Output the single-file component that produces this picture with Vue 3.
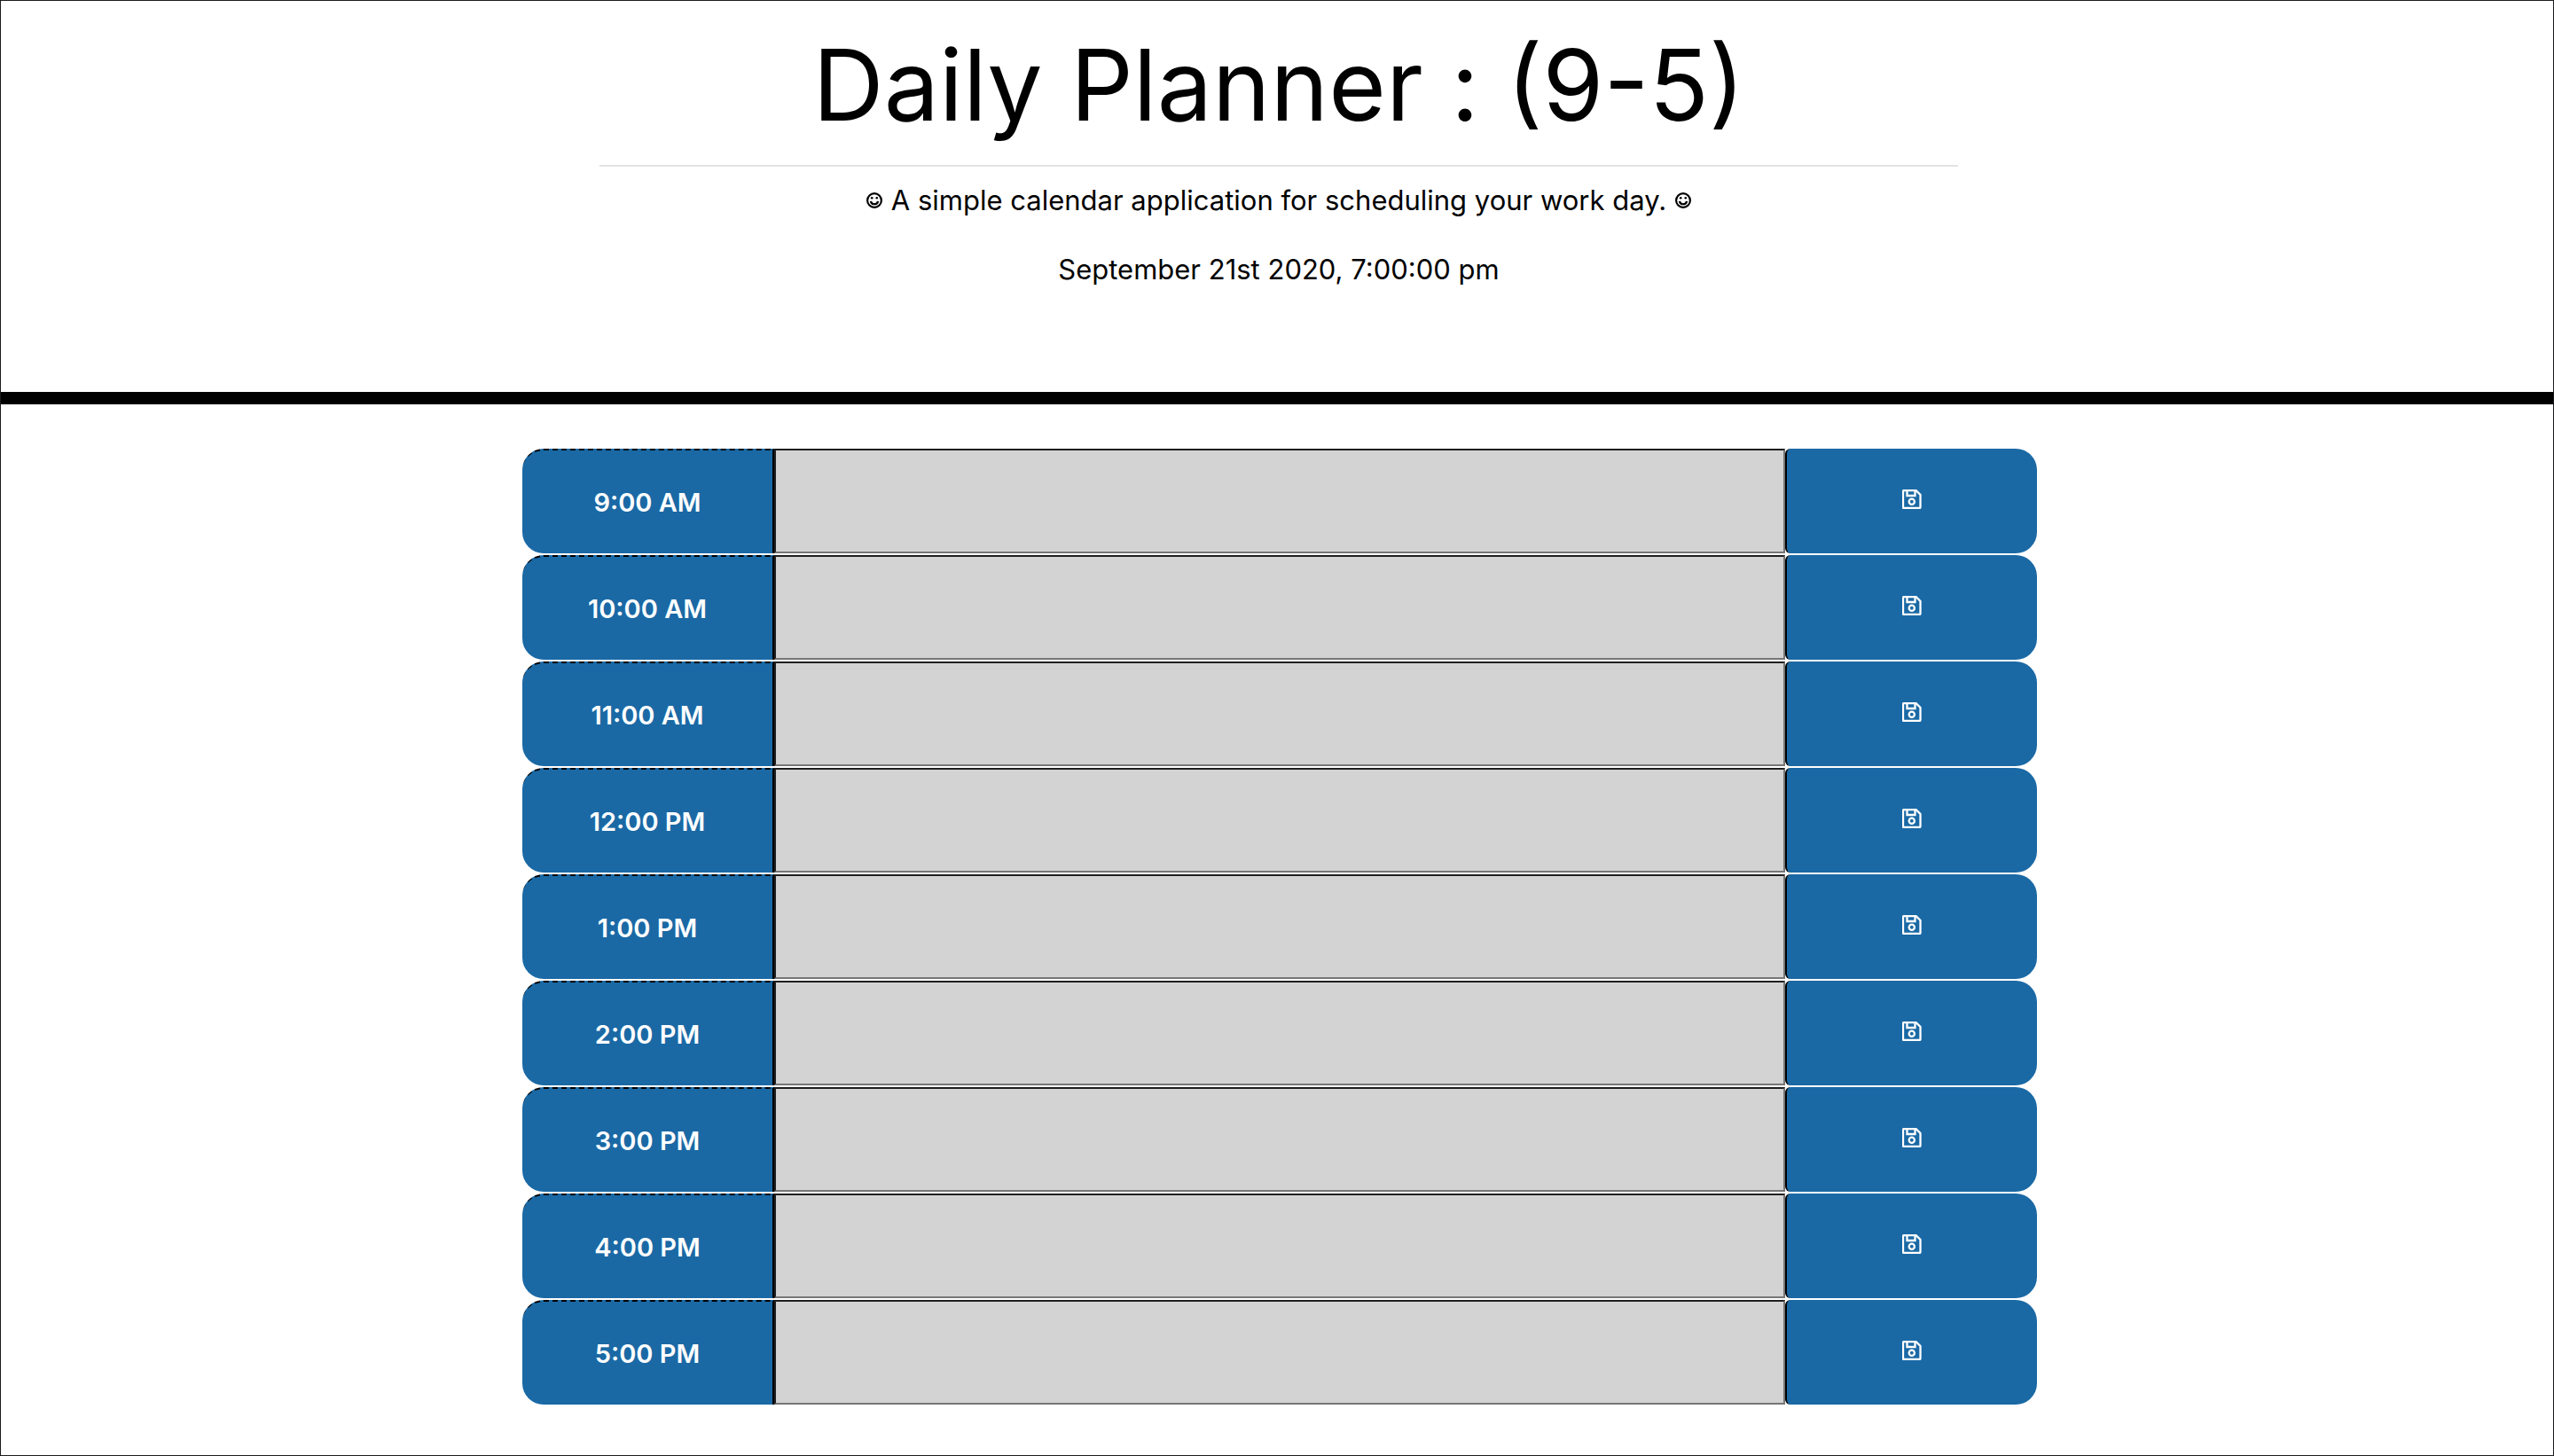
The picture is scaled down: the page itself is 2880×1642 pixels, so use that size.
<script setup>
import { ref } from 'vue'

const hours = ref(
  ['9:00 AM', '10:00 AM', '11:00 AM', '12:00 PM', '1:00 PM', '2:00 PM', '3:00 PM', '4:00 PM', '5:00 PM'].map(
    (label, i) => ({ id: `hour-${i + 9}`, label, note: '' })
  )
)
</script>

<template>
  <div class="page">
    <header class="header">
      <h1 class="title">Daily Planner : (9-5)</h1>
      <hr class="rule" />
      <p class="lead">
        <svg class="smile" viewBox="0 0 18 18" aria-hidden="true">
          <circle cx="9" cy="9" r="7.9" />
          <path d="M5 9.8c.5 4.6 7.500 4.600 8 0" />
          <circle class="eye" cx="6.200" cy="6.300" r="1.300" />
          <circle class="eye" cx="11.800" cy="6.300" r="1.300" />
        </svg>
        A simple calendar application for scheduling your work day.
        <svg class="smile" viewBox="0 0 18 18" aria-hidden="true">
          <circle cx="9" cy="9" r="7.9" />
          <path d="M5 9.8c.5 4.6 7.500 4.600 8 0" />
          <circle class="eye" cx="6.200" cy="6.300" r="1.300" />
          <circle class="eye" cx="11.800" cy="6.300" r="1.300" />
        </svg>
      </p>
      <p class="lead">September 21st 2020, 7:00:00 pm</p>
    </header>

    <main class="planner">
      <form v-for="hour in hours" :key="hour.id" class="row" @submit.prevent>
        <label class="hour" :for="hour.id">{{ hour.label }}</label>
        <textarea :id="hour.id" v-model="hour.note" class="note"></textarea>
        <button class="save" type="submit" :aria-label="`Save ${hour.label}`">
          <svg class="disk" viewBox="0 0 22 22" aria-hidden="true">
            <path d="M2 1h13.500L20.500 6v14a1 1 0 0 1-1 1H2a1 1 0 0 1-1-1V2a1 1 0 0 1 1-1z" />
            <path d="M5.500 1v6h9V1" />
            <circle cx="10.800" cy="13.700" r="3.100" />
          </svg>
        </button>
      </form>
    </main>
  </div>
</template>

<style>
body {
  margin: 0;
  background: #fff;
}
</style>

<style scoped>
.page {
  box-sizing: border-box;
  min-height: 100vh;
  border: 1px solid #1c1c1e;
  color: #000;
  font-family: Inter, "Noto Sans", sans-serif;
}

.header {
  display: flex;
  flex-direction: column;
  align-items: center;
  padding: 28px 0 114px 4px;
  border-bottom: 14px solid #000;
  text-align: center;
}

.title {
  margin: 0;
  font-size: 111px;
  font-weight: 400;
  line-height: 134px;
}

.rule {
  box-sizing: border-box;
  width: 100%;
  max-width: 1532px;
  height: 2px;
  margin: 23px 0 14px;
  border: 0;
  background: #e2e2e2;
}

.lead {
  margin: 0 0 30px;
  font-size: 31px;
  line-height: 48px;
}

.lead:last-child {
  margin-bottom: 0;
}

.smile {
  width: 18px;
  height: 18px;
  margin: 0 1px;
  vertical-align: 2px;
  fill: none;
  stroke: #000;
  stroke-width: 2.2;
}

.smile .eye {
  fill: #000;
  stroke: none;
}

.planner {
  display: flex;
  flex-direction: column;
  gap: 2px;
  max-width: 1708px;
  margin: 0 auto;
  padding: 50px 0 56px 6px;
}

.row {
  display: grid;
  grid-template-columns: 284px 1fr 284px;
  min-height: 118px;
}

.hour {
  display: flex;
  align-items: center;
  justify-content: center;
  border-top: 2px dashed #000;
  border-right: 2px solid #000;
  border-radius: 24px 0 0 24px;
  background: #1a69a5;
  color: #fff;
  font-size: 29px;
  font-weight: 600;
}

.note {
  box-sizing: border-box;
  width: 100%;
  height: 100%;
  margin: 0;
  padding: 4px;
  border: 2px solid;
  border-color: #1e1e1e #767676 #767676 #1e1e1e;
  border-radius: 0;
  background: #d3d3d3;
  font: inherit;
  font-size: 29px;
  resize: none;
}

.save {
  display: flex;
  align-items: center;
  justify-content: center;
  margin: 0;
  padding: 0 0 4px;
  border: 0;
  border-left: 2px solid #000;
  border-radius: 6px 24px 24px 6px;
  background: #1a69a5;
}

.disk {
  width: 22px;
  height: 22px;
  fill: none;
  stroke: #fff;
  stroke-width: 2.3;
}
</style>
